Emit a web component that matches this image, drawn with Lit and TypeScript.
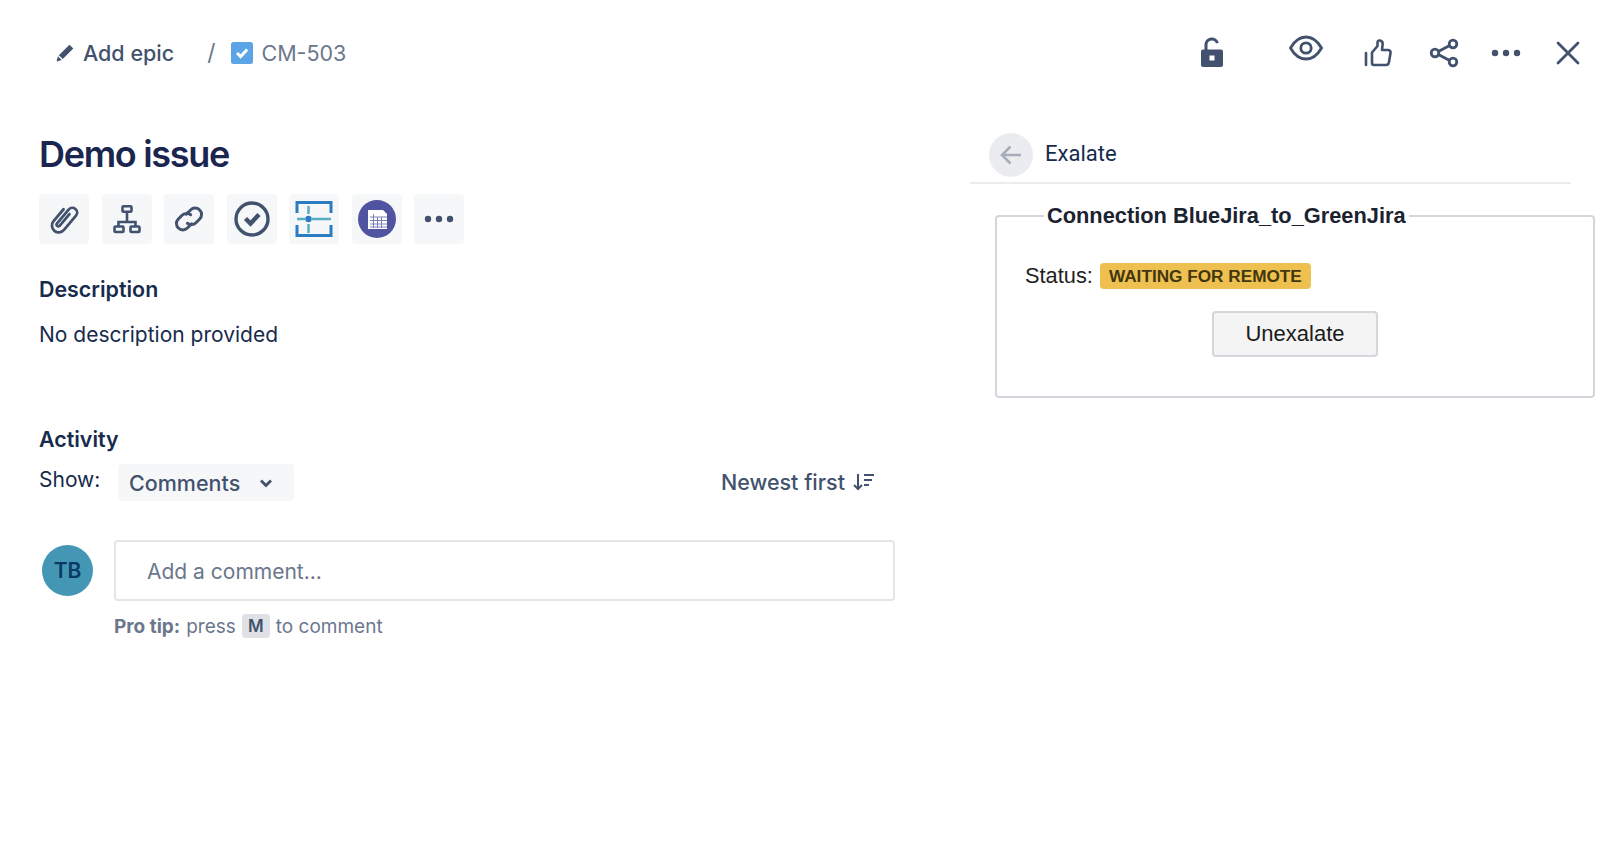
import { LitElement, css, html } from "lit";
import { customElement } from "lit/decorators.js";

const stroke = "#42526e";

@customElement("app-root")
export class AppRoot extends LitElement {
  static styles = css`
    :host {
      display: block;
      height: 842px;
      background: #fff;
      color: #172b4d;
      font-family: Inter, "Liberation Sans", sans-serif;
      overflow: hidden;
    }
    svg {
      display: block;
      flex: none;
    }
    .top {
      display: flex;
      align-items: center;
      height: 106px;
      padding: 0 20px 0 55px;
    }
    .epic {
      display: flex;
      align-items: center;
      gap: 8px;
      font-size: 21.5px;
      font-weight: 500;
      color: #42526e;
    }
    .slash {
      margin-left: 33px;
      font-size: 23px;
      color: #6b778c;
    }
    .key {
      display: flex;
      align-items: center;
      gap: 8px;
      margin-left: 16px;
      font-size: 21.5px;
      color: #6b778c;
    }
    .actions {
      display: flex;
      align-items: center;
      margin-left: auto;
    }
    .main {
      display: flex;
    }
    .left {
      width: 856px;
      margin-left: 39px;
      flex: none;
    }
    h1 {
      margin: 20px 0 0;
      font-size: 36px;
      line-height: 56px;
      font-weight: 600;
      letter-spacing: -1.3px;
      color: #1a2650;
    }
    .tools {
      display: flex;
      gap: 12.5px;
      margin-top: 12px;
    }
    .tool {
      width: 50px;
      height: 50px;
      display: flex;
      align-items: center;
      justify-content: center;
      background: #f6f7f8;
      border-radius: 4px;
    }
    h2 {
      margin: 0;
      font-size: 21.4px;
      line-height: 28px;
      font-weight: 600;
    }
    .desc-title {
      margin-top: 31px;
    }
    .desc {
      margin-top: 18px;
      font-size: 21px;
      line-height: 28px;
    }
    .activity-title {
      margin-top: 76px;
    }
    .show-row {
      display: flex;
      align-items: flex-start;
      margin-top: 11px;
    }
    .show {
      width: 79px;
      font-size: 21px;
      line-height: 28px;
      margin-top: 2px;
    }
    .select {
      display: flex;
      align-items: center;
      justify-content: space-between;
      width: 176px;
      height: 37px;
      box-sizing: border-box;
      padding: 0 21px 0 11px;
      background: #f6f7f8;
      border-radius: 4px;
      font-size: 21.5px;
      font-weight: 500;
      color: #42526e;
    }
    .sort {
      display: flex;
      align-items: center;
      gap: 8px;
      height: 36px;
      margin-left: auto;
      margin-right: 20px;
      font-size: 21.5px;
      font-weight: 500;
      color: #42526e;
    }
    .comment {
      display: flex;
      gap: 21px;
      margin-top: 39px;
    }
    .avatar {
      width: 51px;
      height: 51px;
      margin: 5px 0 0 3px;
      flex: none;
      display: flex;
      align-items: center;
      justify-content: center;
      border-radius: 50%;
      background: #4397b4;
      color: #0b3a66;
      font-size: 21px;
      font-weight: 600;
    }
    .comment-body {
      flex: 1;
    }
    .input {
      height: 61px;
      box-sizing: border-box;
      display: flex;
      align-items: center;
      padding: 2px 0 0 31px;
      border: 2px solid #e4e5e9;
      border-radius: 4px;
      font-size: 21px;
      color: #6b778c;
    }
    .tip {
      display: flex;
      align-items: center;
      gap: 6px;
      margin-top: 13px;
      font-size: 19px;
      color: #6b778c;
    }
    .tip b {
      font-weight: 700;
    }
    kbd {
      width: 28px;
      height: 24px;
      display: flex;
      align-items: center;
      justify-content: center;
      background: #dfe1e6;
      border-radius: 4px;
      font-family: inherit;
      font-size: 17px;
      font-weight: 600;
      color: #42526e;
    }
    .right {
      width: 630px;
      margin-left: 75px;
      flex: none;
      font-family: "Liberation Sans", Arial, sans-serif;
    }
    .panel-head {
      display: flex;
      align-items: center;
      gap: 12px;
      width: 601px;
      margin-top: 27px;
      padding: 0 0 5px 19px;
      box-sizing: border-box;
      border-bottom: 2px solid #ebecf0;
      font-family: Roboto, "Liberation Sans", sans-serif;
      font-size: 22px;
      color: #172b4d;
    }
    .panel-title {
      margin-bottom: 4px;
    }
    .back {
      width: 44px;
      height: 44px;
      display: flex;
      align-items: center;
      justify-content: center;
      border-radius: 50%;
      background: #ebecf0;
    }
    fieldset {
      margin: 19px 0 0 25px;
      padding: 0 0 0 28px;
      width: 600px;
      height: 195px;
      box-sizing: border-box;
      border: 2px solid #d4d6db;
      border-radius: 4px;
      min-width: 0;
    }
    legend {
      margin-left: 19px;
      padding: 0 3px;
      font-size: 21.8px;
      font-weight: 700;
      color: #1b2230;
    }
    .status {
      display: flex;
      align-items: center;
      gap: 7px;
      margin-top: 34px;
      font-size: 21.8px;
      color: #222;
    }
    .badge {
      display: block;
      width: 211px;
      height: 26px;
      line-height: 26px;
      text-align: center;
      background: #edc04f;
      border-radius: 4px;
      font-size: 17.2px;
      font-weight: 700;
      color: #42360f;
    }
    .btn-row {
      display: flex;
      justify-content: center;
      margin: 22px 0 0 -28px;
    }
    button {
      width: 166px;
      height: 46px;
      background: #f4f4f4;
      border: 2px solid #d4d6db;
      border-radius: 4px;
      font-family: inherit;
      font-size: 22px;
      color: #1b1b1b;
    }
  `;

  render() {
    return html`
      <div class="top">
        <div class="epic">
          <svg width="20" height="20" viewBox="0 0 18 18"><path d="M13 1.500l3.500 3.500L7 14.500 3.500 11zM2.700 12l3.300 3.300-3.400 1.200a.8.8 0 0 1-1-1z" fill="${stroke}"/></svg>
          Add epic
        </div>
        <div class="slash">/</div>
        <div class="key">
          <svg width="22" height="22" viewBox="0 0 22 22"><rect width="22" height="22" rx="2.500" fill="#5ba4e6"/><path d="M6 11l3.600 3.600L16.200 7.400" fill="none" stroke="#fff" stroke-width="3"/></svg>
          CM-503
        </div>
        <div class="actions">
          <svg width="24" height="32" viewBox="0 0 24 32"><path d="M6 13V7.500a5.800 5.800 0 0 1 11.400-1.300" fill="none" stroke="${stroke}" stroke-width="3"/><path fill-rule="evenodd" d="M3 12.500h18a2 2 0 0 1 2 2V28a2 2 0 0 1-2 2H3a2 2 0 0 1-2-2V14.500a2 2 0 0 1 2-2zM9.500 18.500v5h5v-5z" fill="${stroke}"/></svg>
          <svg style="margin:-11px 0 0 65px" width="34" height="26" viewBox="0 0 34 26"><path d="M1.500 13C6 5 11 2 17 2s11 3 15.500 11C28 21 23 24 17 24S6 21 1.500 13z" fill="none" stroke="${stroke}" stroke-width="2.800"/><circle cx="17" cy="13" r="5.200" fill="none" stroke="${stroke}" stroke-width="2.800"/></svg>
          <svg style="margin-left:41px" width="28" height="28" viewBox="0 0 28 28"><path d="M2 14v12M8 13.500l5.500-6.500V3.500c0-1.500 1.200-2.200 2.400-2 2 .4 3 2.100 2.700 4.300L18 11h6c1.700 0 2.800 1.300 2.500 3l-1.600 9.500c-.3 1.500-1.300 2.500-3 2.500H10c-1.200 0-2-.8-2-2z" fill="none" stroke="${stroke}" stroke-width="2.600" stroke-linejoin="round" stroke-linecap="round"/></svg>
          <svg style="margin-left:37px" width="30" height="30" viewBox="0 0 30 30"><path d="M23.500 6L6.500 15l17 9" fill="none" stroke="${stroke}" stroke-width="2.800"/><circle cx="24" cy="6" r="3.800" fill="#fff" stroke="${stroke}" stroke-width="2.800"/><circle cx="6" cy="15" r="3.800" fill="#fff" stroke="${stroke}" stroke-width="2.800"/><circle cx="24" cy="24" r="3.800" fill="#fff" stroke="${stroke}" stroke-width="2.800"/></svg>
          <svg style="margin-left:32px" width="30" height="8" viewBox="0 0 30 8"><circle cx="4" cy="4" r="3.200" fill="${stroke}"/><circle cx="15" cy="4" r="3.200" fill="${stroke}"/><circle cx="26" cy="4" r="3.200" fill="${stroke}"/></svg>
          <svg style="margin-left:35px" width="24" height="24" viewBox="0 0 24 24"><path d="M2 2l20 20M22 2L2 22" fill="none" stroke="${stroke}" stroke-width="2.800" stroke-linecap="round"/></svg>
        </div>
      </div>
      <div class="main">
        <div class="left">
          <h1>Demo issue</h1>
          <div class="tools">
            <div class="tool"><svg width="36" height="36" viewBox="0 0 30 30"><path transform="rotate(40 15 15)" d="M9.500 9v13a5.700 5.700 0 0 0 11.400 0V6.500a4 4 0 0 0-8 0v15a1.500 1.500 0 0 0 3 0V9" fill="none" stroke="${stroke}" stroke-width="2.300" stroke-linecap="round"/></svg></div>
            <div class="tool"><svg width="30" height="30" viewBox="0 0 30 30"><path d="M15 8v10M6.500 23v-5h17v5" fill="none" stroke="${stroke}" stroke-width="2.600"/><rect x="10.500" y="2.200" width="9" height="5.500" rx="1" fill="none" stroke="${stroke}" stroke-width="2.600"/><rect x="2.500" y="22.500" width="9" height="5.500" rx="1" fill="none" stroke="${stroke}" stroke-width="2.600"/><rect x="18.500" y="22.500" width="9" height="5.500" rx="1" fill="none" stroke="${stroke}" stroke-width="2.600"/></svg></div>
            <div class="tool"><svg width="32" height="32" viewBox="0 0 30 30"><path d="M12.500 10.500l4-4a6 6 0 0 1 8.500 8.500l-3.500 3.500a6 6 0 0 1-8 .5M17.500 19.500l-4 4A6 6 0 0 1 5 15l3.500-3.500a6 6 0 0 1 8-.5" fill="none" stroke="${stroke}" stroke-width="2.800" stroke-linecap="round"/></svg></div>
            <div class="tool"><svg width="36" height="36" viewBox="0 0 36 36"><circle cx="18" cy="18" r="16" fill="none" stroke="${stroke}" stroke-width="3.400"/><path d="M11.500 17.500l5 5 8.500-9" fill="none" stroke="${stroke}" stroke-width="4.400"/></svg></div>
            <div class="tool"><svg width="38" height="36" viewBox="0 0 38 36"><path d="M2 12V1.500h34V12M2 24v10.500h34V24" fill="none" stroke="#2b7cc0" stroke-width="3"/><path d="M2 18h8M17 18h19" stroke="#56aec4" stroke-width="2.500"/><path d="M13.500 5v8M13.500 23v9" stroke="#56aec4" stroke-width="2.500"/><circle cx="13.500" cy="18" r="3.200" fill="#2b7cc0"/></svg></div>
            <div class="tool"><svg width="38" height="38" viewBox="0 0 38 38"><circle cx="19" cy="19" r="19" fill="#4f53a0"/><path d="M10 10h15l4 4v15H10z" fill="#fff"/><path d="M12 17h17M12 20.500h17M12 24h17M12 27h17M15.500 14v14M19.500 17v11M23.500 17v11" stroke="#7d80b8" stroke-width="1"/></svg></div>
            <div class="tool"><svg width="30" height="8" viewBox="0 0 30 8"><circle cx="4" cy="4" r="3.200" fill="${stroke}"/><circle cx="15" cy="4" r="3.200" fill="${stroke}"/><circle cx="26" cy="4" r="3.200" fill="${stroke}"/></svg></div>
          </div>
          <h2 class="desc-title">Description</h2>
          <div class="desc">No description provided</div>
          <h2 class="activity-title">Activity</h2>
          <div class="show-row">
            <div class="show">Show:</div>
            <div class="select">
              Comments
              <svg width="14" height="10" viewBox="0 0 14 10"><path d="M2 2.500l5 5 5-5" fill="none" stroke="${stroke}" stroke-width="2.800"/></svg>
            </div>
            <div class="sort">
              Newest first
              <svg width="22" height="18" viewBox="0 0 22 18"><path d="M5 1v15M1 12l4 4 4-4" fill="none" stroke="${stroke}" stroke-width="2"/><path d="M11 2h10M11 7h8M11 12h5" stroke="${stroke}" stroke-width="2"/></svg>
            </div>
          </div>
          <div class="comment">
            <div class="avatar">TB</div>
            <div class="comment-body">
              <div class="input">Add a comment...</div>
              <div class="tip"><b>Pro tip:</b> press <kbd>M</kbd> to comment</div>
            </div>
          </div>
        </div>
        <div class="right">
          <div class="panel-head">
            <div class="back"><svg width="24" height="22" viewBox="0 0 24 22"><path d="M22 11H3M11.500 2.500L3 11l8.500 8.500" fill="none" stroke="#a5adba" stroke-width="2.600"/></svg></div>
            <span class="panel-title">Exalate</span>
          </div>
          <fieldset>
            <legend>Connection BlueJira_to_GreenJira</legend>
            <div class="status">Status: <span class="badge">WAITING FOR REMOTE</span></div>
            <div class="btn-row"><button>Unexalate</button></div>
          </fieldset>
        </div>
      </div>
    `;
  }
}
